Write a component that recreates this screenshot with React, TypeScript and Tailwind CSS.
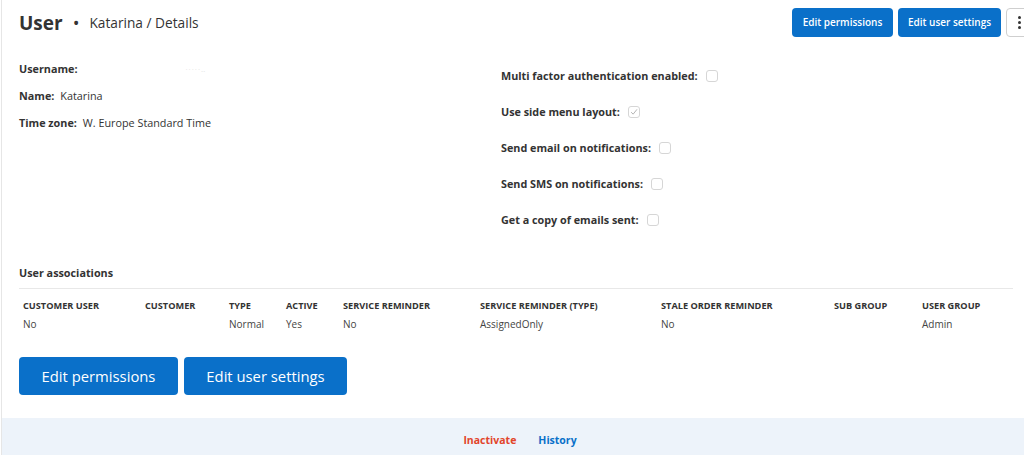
import React from "react";

type Row = Record<string, string>;

const columns = [
  { key: "customerUser", label: "Customer user", w: "w-[122px]" },
  { key: "customer", label: "Customer", w: "w-[84px]" },
  { key: "type", label: "Type", w: "w-[57px]" },
  { key: "active", label: "Active", w: "w-[57px]" },
  { key: "serviceReminder", label: "Service reminder", w: "w-[137px]" },
  { key: "serviceReminderType", label: "Service reminder (type)", w: "w-[181px]" },
  { key: "staleOrder", label: "Stale order reminder", w: "w-[173px]" },
  { key: "subGroup", label: "Sub group", w: "w-[88px]" },
  { key: "userGroup", label: "User group", w: "" },
];

const rows: Row[] = [
  {
    customerUser: "No",
    customer: "",
    type: "Normal",
    active: "Yes",
    serviceReminder: "No",
    serviceReminderType: "AssignedOnly",
    staleOrder: "No",
    subGroup: "",
    userGroup: "Admin",
  },
];

const settings = [
  { label: "Multi factor authentication enabled:", checked: false },
  { label: "Use side menu layout:", checked: true },
  { label: "Send email on notifications:", checked: false },
  { label: "Send SMS on notifications:", checked: false },
  { label: "Get a copy of emails sent:", checked: false },
];

function Checkbox({ checked }: { checked: boolean }) {
  return (
    <span className="inline-flex h-[12px] w-[12px] items-center justify-center rounded-[3px] border border-[#d6d6d6] bg-white">
      {checked && (
        <svg viewBox="0 0 12 12" className="h-[10px] w-[10px]">
          <path d="M2.5 6.2 L5 8.6 L9.6 2.8" fill="none" stroke="#b5b5b5" strokeWidth="1.2" />
        </svg>
      )}
    </span>
  );
}

export default function App() {
  return (
    <div className="h-[455px] w-[1024px] overflow-hidden bg-white font-['Open_Sans',sans-serif] text-[#333]">
      <div className="ml-px flex h-full flex-col border-l border-[#e6e6e6]">
        {/* header */}
        <div className="flex items-start justify-between pl-[17px] pt-[8px]">
          <div className="flex items-center pt-[3px]">
            <h1 className="text-[19px] font-bold leading-[24px] text-[#333]">User</h1>
            <span className="ml-[10px] mr-[10px] text-[18px] leading-none">•</span>
            <span className="pt-[1px] text-[13.7px] text-[#333]">Katarina / Details</span>
          </div>
          <div className="flex gap-[5px] -mr-[8px]">
            <button className="h-[29px] w-[101px] rounded-[4px] bg-[#0a70c9] text-[10px] font-semibold text-white">
              Edit permissions
            </button>
            <button className="h-[29px] w-[103px] rounded-[4px] bg-[#0a70c9] text-[10px] font-semibold text-white">
              Edit user settings
            </button>
            <button className="flex h-[29px] w-[26px] flex-col items-center justify-center gap-[2px] rounded-[4px] border border-[#cfcfcf] bg-white">
              <span className="h-[3px] w-[3px] rounded-full bg-[#333]" />
              <span className="h-[3px] w-[3px] rounded-full bg-[#333]" />
              <span className="h-[3px] w-[3px] rounded-full bg-[#333]" />
            </button>
          </div>
        </div>

        {/* details */}
        <div className="flex pl-[17px] pt-[18px]">
          <div className="flex w-[482px] flex-col gap-[11px] pt-[6px] text-[10.8px] leading-[16px]">
            <div className="flex">
              <span className="font-bold">Username:</span>
              <span className="ml-[108px] text-[8px] tracking-[1px] text-[#e4e4e4]">·····‥</span>
            </div>
            <div>
              <span className="font-bold">Name:</span>
              <span className="ml-[6px]">Katarina</span>
            </div>
            <div>
              <span className="font-bold">Time zone:</span>
              <span className="ml-[6px]">W. Europe Standard Time</span>
            </div>
          </div>
          <div className="flex flex-col gap-[20px] pt-[13px] text-[10.8px] leading-[16px]">
            {settings.map((s) => (
              <div key={s.label} className="flex items-center gap-[8px]">
                <span className="font-bold">{s.label}</span>
                <Checkbox checked={s.checked} />
              </div>
            ))}
          </div>
        </div>

        {/* associations */}
        <div className="ml-[17px] mr-[11px] mt-[37px]">
          <h2 className="pb-[7px] text-[10.8px] font-bold leading-[16px]">User associations</h2>
          <div className="border-t border-[#e8e8e8]" />
          <table className="mt-[10px] w-full table-fixed text-left">
            <thead>
              <tr>
                {columns.map((c) => (
                  <th
                    key={c.key}
                    className={`${c.w} px-[4px] pb-[4px] text-[9.2px] font-bold uppercase leading-[14px] text-[#333]`}
                  >
                    {c.label}
                  </th>
                ))}
              </tr>
            </thead>
            <tbody>
              {rows.map((r, i) => (
                <tr key={i}>
                  {columns.map((c) => (
                    <td key={c.key} className="px-[4px] text-[10px] leading-[14px] text-[#444]">
                      {r[c.key]}
                    </td>
                  ))}
                </tr>
              ))}
            </tbody>
          </table>
        </div>

        {/* bottom actions */}
        <div className="ml-[17px] mt-[26px] flex gap-[6px]">
          <button className="h-[38px] w-[159px] rounded-[4px] bg-[#0a70c9] text-[14.8px] text-white">
            Edit permissions
          </button>
          <button className="h-[38px] w-[163px] rounded-[4px] bg-[#0a70c9] text-[14.8px] text-white">
            Edit user settings
          </button>
        </div>

        <div className="mt-auto flex h-[37px] items-center justify-center gap-[22px] bg-[#edf3fa] pl-[14px] pt-[8px] text-[10.5px] font-bold">
          <a className="text-[#e2452b]">Inactivate</a>
          <a className="text-[#0a70c9]">History</a>
        </div>
      </div>
    </div>
  );
}
